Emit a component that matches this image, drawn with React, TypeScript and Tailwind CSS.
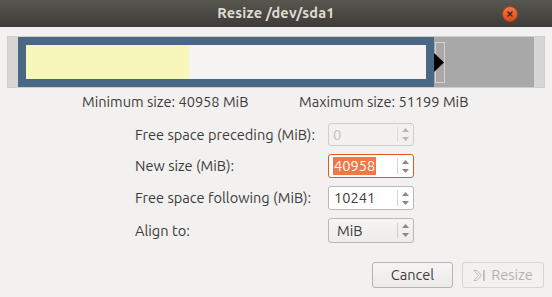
import React from "react";

const SpinArrows = ({ dim = false }: { dim?: boolean }) => (
  <div className="flex flex-col items-center justify-center w-[15px] gap-[5px]">
    <svg width="7" height="4" viewBox="0 0 7 4">
      <path d="M0 4 L3.5 0 L7 4 Z" fill={dim ? "#b9b8b6" : "#8a8986"} />
    </svg>
    <svg width="7" height="4" viewBox="0 0 7 4">
      <path d="M0 0 L3.5 4 L7 0 Z" fill={dim ? "#b9b8b6" : "#8a8986"} />
    </svg>
  </div>
);

const App = () => {
  return (
    <div className="w-[552px] h-[297px] bg-[#f2f1f0] text-[14.6px] text-[#3c3c3c] font-['Ubuntu','Noto_Sans','Open_Sans',sans-serif] flex flex-col">
      {/* title bar */}
      <div className="h-[27px] shrink-0 bg-gradient-to-b from-[#57564f] to-[#3d3c38] grid grid-cols-[1fr_auto_1fr] items-center">
        <div />
        <div className="text-[#dfdbd2] font-bold text-[14.5px] tracking-[0.2px] leading-none">Resize /dev/sda1</div>
        <div className="flex justify-end pr-[34px]">
          <div className="w-[16px] h-[16px] rounded-full bg-gradient-to-b from-[#f07746] to-[#df4a16] border border-[#b5401a] flex items-center justify-center">
            <svg width="8" height="8" viewBox="0 0 8 8">
              <path d="M1.5 1.5 L6.5 6.5 M6.5 1.5 L1.5 6.5" stroke="#3a2a22" strokeWidth="1.4" />
            </svg>
          </div>
        </div>
      </div>

      {/* partition graphic */}
      <div className="mt-[9px] mx-[7px] h-[52px] border border-[#cfcecc] flex">
        <div className="w-[10px] bg-[#d6d6d6]" />
        <div className="w-[416px] border-[8px] border-[#4a6784] flex">
          <div className="w-[163px] bg-[#f7f6bb]" />
          <div className="flex-1 bg-[#f5f4f2]" />
        </div>
        <div className="w-[100px] bg-[#a8a8a8] relative">
          <div className="absolute left-[1px] top-[5px] w-[10px] h-[41px] border border-[#d2d2d2]" />
          <svg className="absolute left-0 top-[16px]" width="10" height="19" viewBox="0 0 10 19">
            <path d="M0 0 L10 9.5 L0 19 Z" fill="#000" />
          </svg>
        </div>
        <div className="w-[10px] bg-[#d6d6d6]" />
      </div>

      {/* min / max */}
      <div className="mt-[5px] flex leading-[18px]">
        <div className="ml-[82px] w-[217px]">Minimum size: 40958 MiB</div>
        <div>Maximum size: 51199 MiB</div>
      </div>

      {/* form */}
      <div className="mt-[12px] ml-[135px] grid grid-cols-[193px_86px] gap-y-[8px] items-center">
        <div>Free space preceding (MiB):</div>
        <div className="h-[23px] rounded-[3px] border border-[#cfcecb] bg-[#f2f1f0] flex">
          <div className="flex-1 pl-[4px] text-[#c3c2bf] leading-[21px]">0</div>
          <div className="w-px my-[3px] bg-[#dcdbd9]" />
          <SpinArrows dim />
        </div>

        <div>New size (MiB):</div>
        <div className="h-[24px] rounded-[3px] border border-[#e95420] bg-white flex">
          <div className="flex-1 pl-[4px] flex items-center">
            <span className="bg-[#f07746] text-white leading-[18px] px-[1px]">40958</span>
          </div>
          <div className="w-px my-[3px] bg-[#d6d5d3]" />
          <SpinArrows />
        </div>

        <div>Free space following (MiB):</div>
        <div className="h-[24px] rounded-[3px] border border-[#b9b8b5] bg-white flex">
          <div className="flex-1 pl-[5px] leading-[22px]">10241</div>
          <div className="w-px my-[3px] bg-[#d6d5d3]" />
          <SpinArrows />
        </div>

        <div>Align to:</div>
        <div className="h-[25px] rounded-[3px] border border-[#b9b8b5] bg-gradient-to-b from-[#f6f5f4] to-[#edecea] flex">
          <div className="flex-1 pl-[8px] leading-[23px]">MiB</div>
          <div className="w-px my-[4px] bg-[#d0cfcd]" />
          <SpinArrows />
        </div>
      </div>

      {/* buttons */}
      <div className="mt-auto mb-[9px] mr-[8px] flex justify-end gap-[9px]">
        <div className="w-[81px] h-[26px] rounded-[3px] border border-[#b4b3b0] bg-gradient-to-b from-[#f6f5f4] to-[#eceae8] flex items-center justify-center">
          Cancel
        </div>
        <div className="w-[82px] h-[26px] rounded-[3px] border border-[#d6d5d3] bg-[#f2f1f0] flex items-center justify-center gap-[5px] text-[#b3b2af]">
          <svg width="13" height="13" viewBox="0 0 13 13">
            <path d="M1 1.5 L4 1.5 L8.5 6.5 L4 11.5 L1 11.5 L5.5 6.5 Z" fill="none" stroke="#bdbcb9" strokeWidth="1" />
            <rect x="10" y="1" width="1.8" height="11" fill="#bdbcb9" />
          </svg>
          Resize
        </div>
      </div>
    </div>
  );
};

export default App;
